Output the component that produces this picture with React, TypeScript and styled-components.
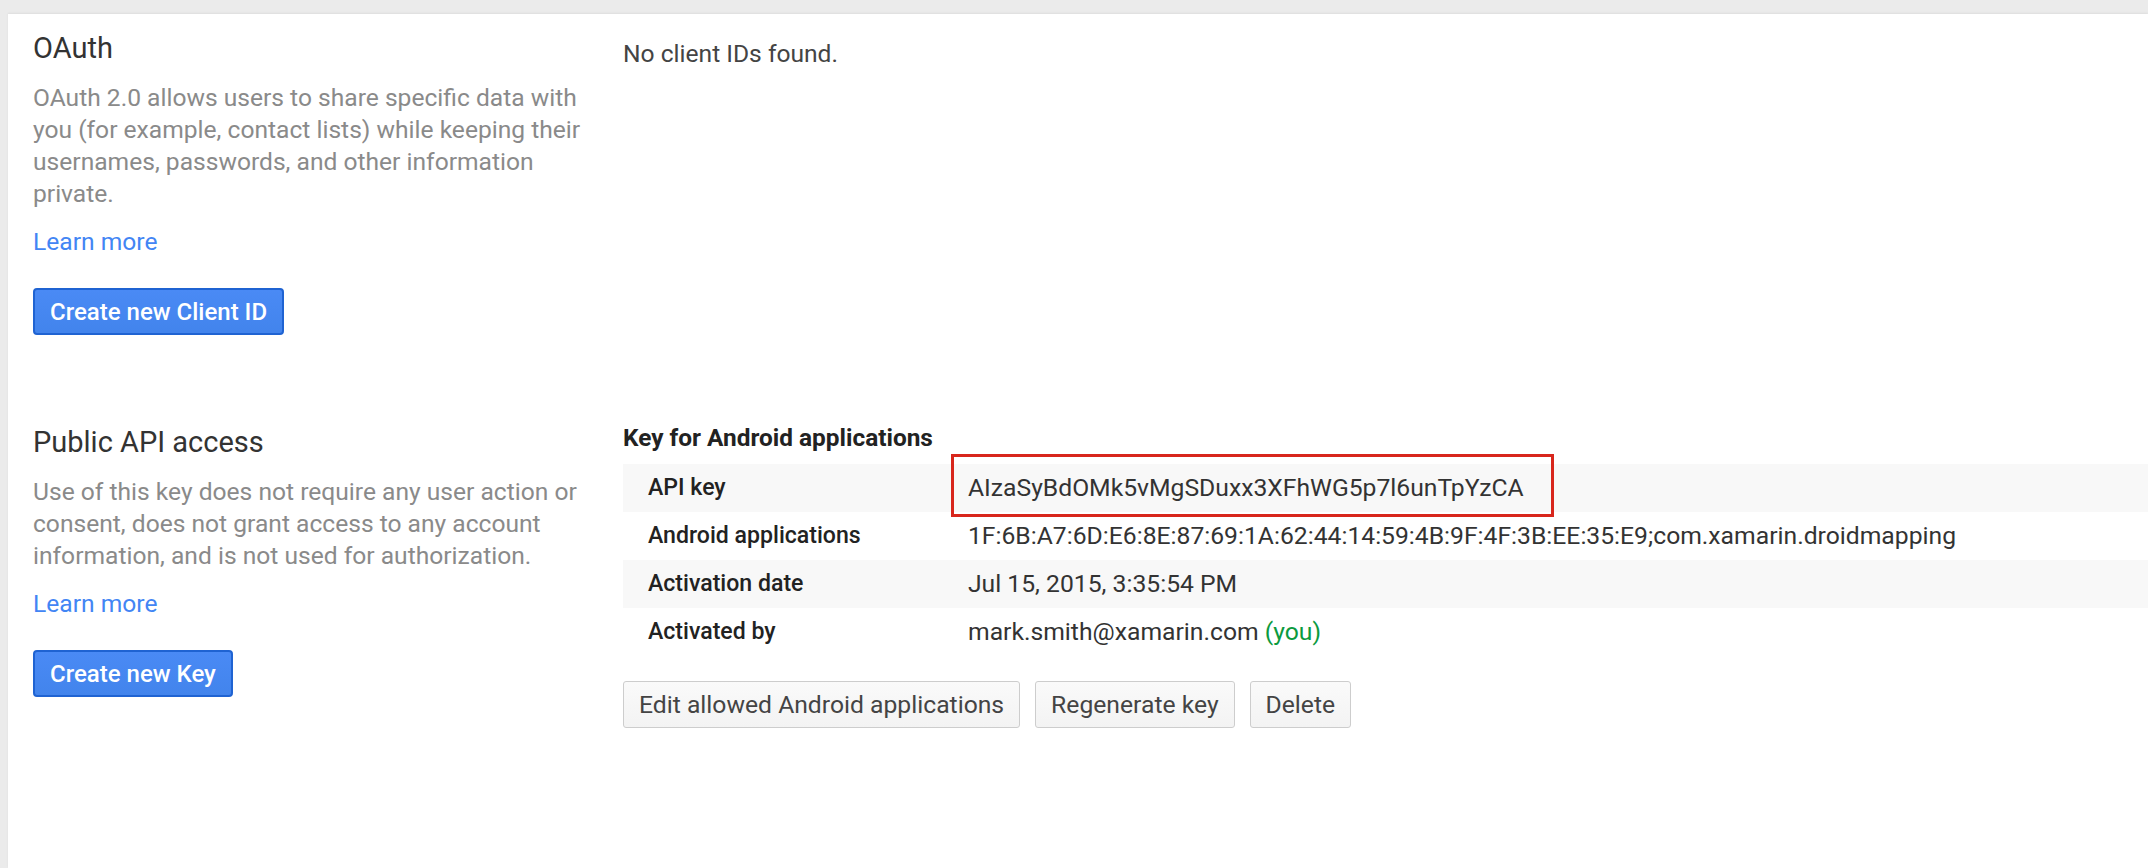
import React from "react";
import styled, { createGlobalStyle } from "styled-components";

const Global = createGlobalStyle`
  html, body {
    margin: 0;
    padding: 0;
    background: #ebebeb;
  }
  body {
    font-family: Roboto, "Noto Sans", Arial, sans-serif;
    -webkit-font-smoothing: antialiased;
  }
`;

const Page = styled.div`
  padding: 14px 0 0 8px;
  min-height: 100vh;
  box-sizing: border-box;
`;

const Card = styled.main`
  background: #ffffff;
  min-height: calc(100vh - 14px);
  box-sizing: border-box;
  padding: 16px 0 0 25px;
  display: flex;
  flex-direction: column;
  gap: 89px;
  box-shadow: 0 -1px 2px rgba(0, 0, 0, 0.06);
`;

const Section = styled.section`
  display: grid;
  grid-template-columns: 590px 1fr;
  align-items: start;
`;

const Info = styled.div`
  display: flex;
  flex-direction: column;
  align-items: flex-start;
  width: 568px;
`;

const Heading = styled.h2`
  margin: 0;
  font-size: 29px;
  line-height: 36px;
  font-weight: 400;
  color: #333333;
`;

const Description = styled.p`
  margin: 16px 0 0;
  font-size: 24.6px;
  line-height: 32px;
  color: #8a8a8a;
`;

const LearnMore = styled.a`
  margin-top: 16px;
  font-size: 24.6px;
  line-height: 32px;
  color: #4285f4;
  text-decoration: none;
  cursor: pointer;
`;

const PrimaryButton = styled.button`
  margin-top: 30px;
  height: 47px;
  padding: 0 15px;
  font-family: inherit;
  font-size: 24px;
  font-weight: 500;
  color: #ffffff;
  background: linear-gradient(#4a8af5, #4284ec);
  border: 2px solid #1f63d2;
  border-radius: 4px;
  cursor: pointer;
`;

const Detail = styled.div<{ $offset?: number }>`
  padding-top: ${(p) => p.$offset ?? 0}px;
  min-width: 0;
`;

const Plain = styled.p`
  margin: 0;
  font-size: 24.6px;
  line-height: 32px;
  color: #444444;
`;

const KeyTitle = styled.h3`
  margin: 0;
  font-size: 24.4px;
  line-height: 28px;
  font-weight: 700;
  color: #222222;
`;

const Table = styled.div`
  margin-top: 12px;
  display: flex;
  flex-direction: column;
`;

const Row = styled.div<{ $shaded?: boolean }>`
  display: grid;
  grid-template-columns: 345px 1fr;
  height: 48px;
  align-items: center;
  background: ${(p) => (p.$shaded ? "#f8f8f8" : "transparent")};
  line-height: 48px;
`;

const Label = styled.div`
  padding-left: 25px;
  font-size: 23.1px;
  font-weight: 500;
  color: #222222;
`;

const Value = styled.div`
  position: relative;
  font-size: 24.7px;
  color: #333333;
  white-space: nowrap;
`;

const You = styled.span`
  color: #0b9a3e;
`;

const Highlight = styled.span`
  position: absolute;
  left: -17px;
  top: -10px;
  width: 603px;
  height: 63px;
  box-sizing: border-box;
  border: 3px solid #d8261c;
  pointer-events: none;
`;

const Actions = styled.div`
  margin-top: 25px;
  display: flex;
  gap: 15px;
`;

const GrayButton = styled.button`
  height: 47px;
  padding: 0 15px;
  font-family: inherit;
  font-size: 24.7px;
  font-weight: 400;
  color: #444444;
  background: linear-gradient(#fafafa, #f3f3f3);
  border: 1px solid #cdcdcd;
  border-radius: 3px;
  cursor: pointer;
`;

const rows = [
  { label: "Android applications", value: "1F:6B:A7:6D:E6:8E:87:69:1A:62:44:14:59:4B:9F:4F:3B:EE:35:E9;com.xamarin.droidmapping" },
  { label: "Activation date", value: "Jul 15, 2015, 3:35:54 PM" },
];

export default function App() {
  return (
    <>
      <Global />
      <Page>
        <Card>
          <Section>
            <Info>
              <Heading>OAuth</Heading>
              <Description>
                OAuth 2.0 allows users to share specific data with you (for example, contact lists) while
                keeping their usernames, passwords, and other information private.
              </Description>
              <LearnMore>Learn more</LearnMore>
              <PrimaryButton>Create new Client ID</PrimaryButton>
            </Info>
            <Detail $offset={8}>
              <Plain>No client IDs found.</Plain>
            </Detail>
          </Section>

          <Section>
            <Info>
              <Heading>Public API access</Heading>
              <Description>
                Use of this key does not require any user action or consent, does not grant access to any
                account information, and is not used for authorization.
              </Description>
              <LearnMore>Learn more</LearnMore>
              <PrimaryButton>Create new Key</PrimaryButton>
            </Info>
            <Detail>
              <KeyTitle>Key for Android applications</KeyTitle>
              <Table>
                <Row $shaded>
                  <Label>API key</Label>
                  <Value>
                    AIzaSyBdOMk5vMgSDuxx3XFhWG5p7l6unTpYzCA
                    <Highlight />
                  </Value>
                </Row>
                {rows.map((r, i) => (
                  <Row key={r.label} $shaded={i % 2 === 1}>
                    <Label>{r.label}</Label>
                    <Value>{r.value}</Value>
                  </Row>
                ))}
                <Row>
                  <Label>Activated by</Label>
                  <Value>
                    mark.smith@xamarin.com <You>(you)</You>
                  </Value>
                </Row>
              </Table>
              <Actions>
                <GrayButton>Edit allowed Android applications</GrayButton>
                <GrayButton>Regenerate key</GrayButton>
                <GrayButton>Delete</GrayButton>
              </Actions>
            </Detail>
          </Section>
        </Card>
      </Page>
    </>
  );
}
